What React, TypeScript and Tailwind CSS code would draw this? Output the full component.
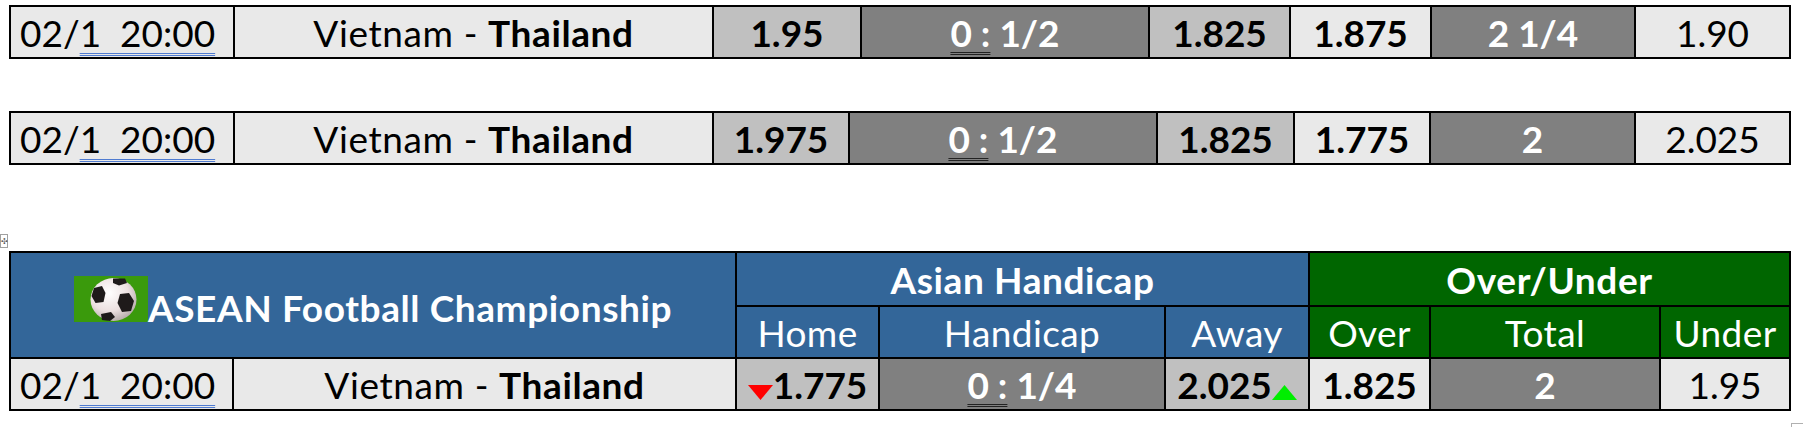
import React from "react";

const FONT = { fontFamily: "Lato, 'Open Sans', 'Noto Sans', sans-serif" };

const L = "bg-[#e9e9e9]";
const M = "bg-[#c0c0c0]";
const D = "bg-[#808080]";

function DateText() {
  return (
    <span className="whitespace-pre">
      02/
      <span className="underline decoration-double decoration-[#4f7bd0] decoration-[1px] underline-offset-[6px]">
        1  20:00
      </span>
    </span>
  );
}

function Teams() {
  return (
    <span className="whitespace-pre tracking-[0.6px]">
      Vietnam - <b className="font-bold">Thailand</b>
    </span>
  );
}

function Hdp({ rest }: { rest: string }) {
  return (
    <span className="whitespace-pre font-bold text-white">
      <span className="underline decoration-double decoration-[#222222] decoration-[1px] underline-offset-[5px]">
        0 :
      </span>{" "}
      {rest}
    </span>
  );
}

function Cell({
  bg,
  children,
  className = "",
}: {
  bg: string;
  children: React.ReactNode;
  className?: string;
}) {
  return (
    <div className={`flex items-center justify-center ${bg} ${className}`}>
      {children}
    </div>
  );
}

type RowData = {
  cols: string;
  home: string;
  hdp: string;
  away: string;
  over: string;
  total: string;
  under: string;
};

function OddsTable({ d }: { d: RowData }) {
  return (
    <div
      className={`grid ${d.cols} grid-rows-[50px] gap-[2px] bg-black p-[2px] w-[1782px] text-[37px] leading-none text-black`}
    >
      <Cell bg={L} className="justify-start pl-[9px]">
        <DateText />
      </Cell>
      <Cell bg={L}>
        <Teams />
      </Cell>
      <Cell bg={M} className="font-bold">
        {d.home}
      </Cell>
      <Cell bg={D}>
        <Hdp rest={d.hdp} />
      </Cell>
      <Cell bg={M} className="font-bold">
        {d.away}
      </Cell>
      <Cell bg={L} className="font-bold">
        {d.over}
      </Cell>
      <Cell bg={D} className="font-bold text-white">
        {d.total}
      </Cell>
      <Cell bg={L}>{d.under}</Cell>
    </div>
  );
}

function Ball() {
  return (
    <svg width="74" height="46" viewBox="0 0 74 46" className="shrink-0">
      <defs>
        <radialGradient id="bg1" cx="0.4" cy="0.35" r="0.7">
          <stop offset="0" stopColor="#ffffff" />
          <stop offset="0.6" stopColor="#ece0e0" />
          <stop offset="1" stopColor="#b3a8a8" />
        </radialGradient>
      </defs>
      <rect width="74" height="46" fill="#3a9a0c" />
      <ellipse cx="39.5" cy="23.5" rx="23" ry="21.5" fill="url(#bg1)" />
      <path d="M39 2.5 L51 2.5 L53 7 L45 9.5 L39 7 Z" fill="#1e1a1a" />
      <path d="M20 12 L28 10 L31.5 17 L29.5 26 L21.5 27 L17.5 20 Z" fill="#1e1a1a" />
      <path d="M46 18 L55 17 L60 25 L57 35 L48 36 L43.5 27 Z" fill="#1e1a1a" />
      <path d="M27 38 L37 36 L41 41 L36 45 L28 44 Z" fill="#1e1a1a" />
    </svg>
  );
}

function MainTable() {
  return (
    <div className="grid grid-cols-[221px_501px_141px_284px_142px_119px_228px_128px] grid-rows-[52px_50px_50px] gap-[2px] bg-black p-[2px] w-[1782px] text-[37px] leading-none">
      <div className="col-span-2 row-span-2 flex items-center justify-center bg-[#336699] text-white font-bold pb-[12px]">
        <div className="flex items-end">
          <Ball />
          <span className="mb-[-4px] tracking-[0.6px]">ASEAN Football Championship</span>
        </div>
      </div>
      <div className="col-span-3 flex items-center justify-center bg-[#336699] text-white font-bold tracking-[0.6px]">
        Asian Handicap
      </div>
      <div className="col-span-3 flex items-center justify-center bg-[#006600] text-white font-bold tracking-[0.6px]">
        Over/Under
      </div>
      <Cell bg="bg-[#336699]" className="text-white tracking-[0.4px]">Home</Cell>
      <Cell bg="bg-[#336699]" className="text-white tracking-[0.4px]">Handicap</Cell>
      <Cell bg="bg-[#336699]" className="text-white tracking-[0.4px]">Away</Cell>
      <Cell bg="bg-[#006600]" className="text-white tracking-[0.4px]">Over</Cell>
      <Cell bg="bg-[#006600]" className="text-white tracking-[0.4px]">Total</Cell>
      <Cell bg="bg-[#006600]" className="text-white tracking-[0.4px]">Under</Cell>

      <Cell bg={L} className="justify-start pl-[9px] text-black">
        <DateText />
      </Cell>
      <Cell bg={L} className="text-black">
        <Teams />
      </Cell>
      <Cell bg={M} className="font-bold text-black">
        <span className="flex items-end">
          <svg width="25" height="15" viewBox="0 0 25 15" className="mb-[3px]">
            <path d="M0 0 H25 L12.5 15 Z" fill="#ff0000" />
          </svg>
          <span>1.775</span>
        </span>
      </Cell>
      <Cell bg={D}>
        <Hdp rest="1/4" />
      </Cell>
      <Cell bg={M} className="font-bold text-black">
        <span className="flex items-end">
          <span>2.025</span>
          <svg width="25" height="15" viewBox="0 0 25 15" className="mb-[3px]">
            <path d="M0 15 H25 L12.5 0 Z" fill="#00ee00" />
          </svg>
        </span>
      </Cell>
      <Cell bg={L} className="font-bold text-black">1.825</Cell>
      <Cell bg={D} className="font-bold text-white">2</Cell>
      <Cell bg={L} className="text-black">1.95</Cell>
    </div>
  );
}

export default function App() {
  const t1: RowData = {
    cols: "grid-cols-[222px_477px_146px_286px_139px_139px_202px_153px]",
    home: "1.95",
    hdp: "1/2",
    away: "1.825",
    over: "1.875",
    total: "2 1/4",
    under: "1.90",
  };
  const t2: RowData = {
    cols: "grid-cols-[222px_477px_134px_306px_135px_134px_203px_153px]",
    home: "1.975",
    hdp: "1/2",
    away: "1.825",
    over: "1.775",
    total: "2",
    under: "2.025",
  };
  return (
    <div
      className="w-[1803px] h-[427px] overflow-hidden bg-white pl-[9px] pt-[5px]"
      style={FONT}
    >
      <OddsTable d={t1} />
      <div className="mt-[52px]">
        <OddsTable d={t2} />
      </div>
      <div className="mt-[69px] -ml-[9px] flex h-[14px] w-[8px] items-center justify-center border border-[#a0a0a0] bg-white text-[8px] leading-none text-[#555]">
        ✣
      </div>
      <div className="mt-[3px]">
        <MainTable />
      </div>
      <div className="mt-[12px] ml-[1782px] h-[10px] w-[12px] border-l border-t border-[#b0b0b0]" />
    </div>
  );
}
